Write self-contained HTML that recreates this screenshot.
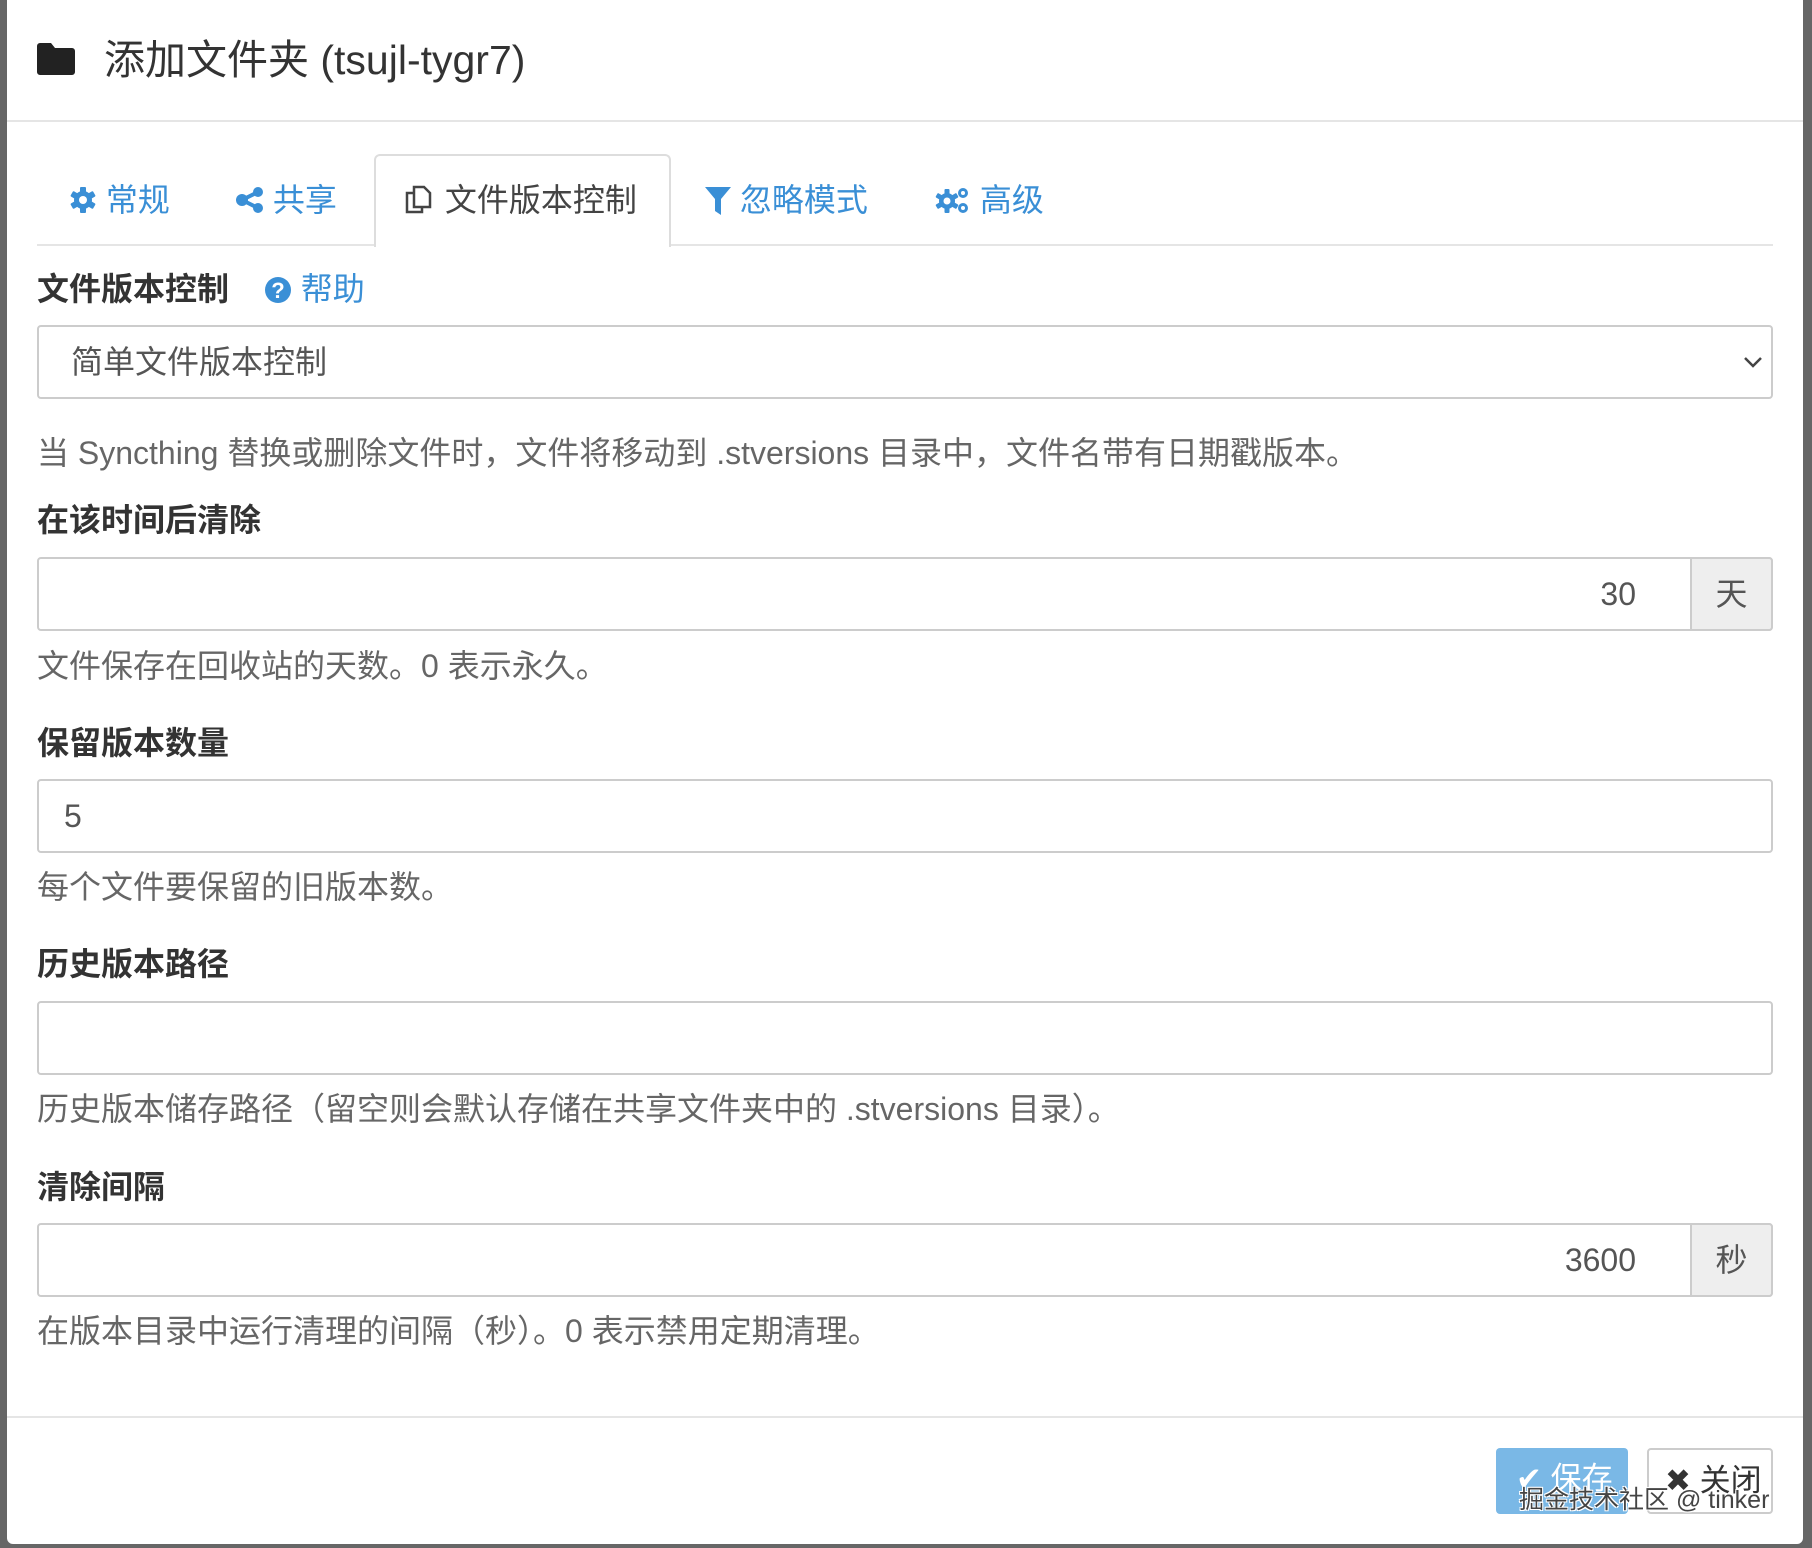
<!DOCTYPE html>
<html><head><meta charset="utf-8"><style>
*{box-sizing:border-box;margin:0;padding:0}
body{width:1812px;height:1548px;background:#666;position:relative;overflow:hidden;font-family:"Liberation Sans","Noto Sans CJK SC",sans-serif;color:#333}
.modal{position:absolute;left:7px;top:0;width:1796px;height:1544px;background:#fff;border-radius:0 0 6px 6px}
.abs{position:absolute}
.title{left:97px;top:32px;font-size:41px;color:#333;line-height:56px}
.hline{height:2px;background:#e5e5e5}
.tab{top:178px;font-size:32px;color:#3a8fd6;line-height:44px;white-space:nowrap}
.active{left:367px;top:154px;width:297px;height:93px;border:2px solid #ddd;border-bottom:none;background:#fff;border-radius:6px 6px 0 0}
.lbl{font-size:32px;font-weight:bold;color:#333;line-height:44px;left:30px}
.help{font-size:32px;color:#666;line-height:44px;left:30px;white-space:nowrap}
.inp{left:30px;width:1736px;height:74px;border:2px solid #ccc;border-radius:4px;background:#fff;font-size:32px;color:#555;line-height:70px}
.addon{position:absolute;right:-2px;top:-2px;width:83px;height:74px;background:#eee;border:2px solid #ccc;border-radius:0 4px 4px 0;text-align:center;line-height:70px;color:#555}
</style></head><body>
<div class="modal">
<svg class="abs" style="left:30px;top:43px" width="38" height="32" viewBox="0 0 38 32"><path d="M3 0h11l4 5h17a3 3 0 0 1 3 3v21a3 3 0 0 1-3 3H3a3 3 0 0 1-3-3V3a3 3 0 0 1 3-3z" fill="#222"/></svg>
<div class="abs title">添加文件夹 (tsujl-tygr7)</div>
<div class="abs hline" style="left:0;top:120px;width:1796px"></div>
<div class="abs hline" style="left:30px;top:244px;width:1736px"></div>
<div class="abs active"></div>
<div class="abs tab" style="left:62px"><svg width="28" height="28" viewBox="0 0 28 28" style="vertical-align:-3px"><g fill="#3a8fd6"><circle cx="14" cy="14" r="9"/><rect x="11" y="1" width="6" height="26" rx="1"/><rect x="11" y="1" width="6" height="26" rx="1" transform="rotate(60 14 14)"/><rect x="11" y="1" width="6" height="26" rx="1" transform="rotate(120 14 14)"/></g><circle cx="14" cy="14" r="4" fill="#fff"/></svg> 常规</div>
<div class="abs tab" style="left:229px"><svg width="28" height="28" viewBox="0 0 28 28" style="vertical-align:-3px"><g fill="#3a8fd6"><circle cx="22" cy="6" r="5"/><circle cx="22" cy="22" r="5"/><circle cx="6" cy="14" r="6"/></g><path d="M6 14L22 6M6 14L22 22" stroke="#3a8fd6" stroke-width="4"/></svg> 共享</div>
<div class="abs tab" style="left:397px;color:#444"><svg width="32" height="32" viewBox="0 0 32 32" style="vertical-align:-4px" fill="none" stroke="#444" stroke-width="2.5"><path d="M10 4h10l6 6v14H10z"/><path d="M10 10H3v19h15v-5"/></svg> 文件版本控制</div>
<div class="abs tab" style="left:698px"><svg width="26" height="28" viewBox="0 0 26 28" style="vertical-align:-4px"><path d="M0 0h26L16 12v16l-6-4V12z" fill="#3a8fd6"/></svg> 忽略模式</div>
<div class="abs tab" style="left:928px"><svg width="36" height="30" viewBox="0 0 36 30" style="vertical-align:-4px"><g fill="#3a8fd6"><circle cx="12" cy="16" r="8"/><rect x="9.5" y="4" width="5" height="24" rx="1"/><rect x="9.5" y="4" width="5" height="24" rx="1" transform="rotate(60 12 16)"/><rect x="9.5" y="4" width="5" height="24" rx="1" transform="rotate(120 12 16)"/><circle cx="28" cy="8" r="5"/><circle cx="28" cy="23" r="5"/></g><circle cx="12" cy="16" r="3.5" fill="#fff"/><circle cx="28" cy="8" r="2" fill="#fff"/><circle cx="28" cy="23" r="2" fill="#fff"/></svg> 高级</div>

<div class="abs lbl" style="top:267px">文件版本控制 <span style="font-weight:normal;color:#3a8fd6;margin-left:26px"><svg width="28" height="28" viewBox="0 0 28 28" style="vertical-align:-4px"><circle cx="14" cy="14" r="13" fill="#3a8fd6"/><text x="14" y="22" font-size="22" font-weight="bold" fill="#fff" text-anchor="middle" font-family="Liberation Sans">?</text></svg> 帮助</span></div>
<div class="abs inp" style="top:325px;padding-left:32px">简单文件版本控制<svg class="abs" style="right:8px;top:28px" width="20" height="14" viewBox="0 0 20 14"><path d="M2 3l8 8 8-8" fill="none" stroke="#444" stroke-width="2.5"/></svg></div>
<div class="abs help" style="top:431px">当 Syncthing 替换或删除文件时，文件将移动到 .stversions 目录中，文件名带有日期戳版本。</div>

<div class="abs lbl" style="top:498px">在该时间后清除</div>
<div class="abs inp" style="top:557px;text-align:right;padding-right:135px">30<div class="addon">天</div></div>
<div class="abs help" style="top:644px">文件保存在回收站的天数。0 表示永久。</div>

<div class="abs lbl" style="top:721px">保留版本数量</div>
<div class="abs inp" style="top:779px;padding-left:25px">5</div>
<div class="abs help" style="top:865px">每个文件要保留的旧版本数。</div>

<div class="abs lbl" style="top:942px">历史版本路径</div>
<div class="abs inp" style="top:1001px"></div>
<div class="abs help" style="top:1087px">历史版本储存路径（留空则会默认存储在共享文件夹中的 .stversions 目录）。</div>

<div class="abs lbl" style="top:1165px">清除间隔</div>
<div class="abs inp" style="top:1223px;text-align:right;padding-right:135px">3600<div class="addon">秒</div></div>
<div class="abs help" style="top:1309px">在版本目录中运行清理的间隔（秒）。0 表示禁用定期清理。</div>

<div class="abs hline" style="left:0;top:1416px;width:1796px"></div>
<div class="abs" style="left:1489px;top:1448px;width:132px;height:66px;background:#7ab8e6;border-radius:4px;color:#fff;font-size:31px;line-height:62px;padding-left:20px">✔ 保存</div>
<div class="abs" style="left:1640px;top:1448px;width:126px;height:66px;border:2px solid #ccc;border-radius:4px;color:#333;font-size:31px;line-height:62px;padding-left:16px">✖ 关闭</div>
<div class="abs" style="left:1512px;top:1480px;font-size:25px;color:#444;white-space:nowrap;text-shadow:1px 1px 0 #fff,-1px -1px 0 #fff,1px -1px 0 #fff,-1px 1px 0 #fff">掘金技术社区 @ tinker</div>
</div>
</body></html>
